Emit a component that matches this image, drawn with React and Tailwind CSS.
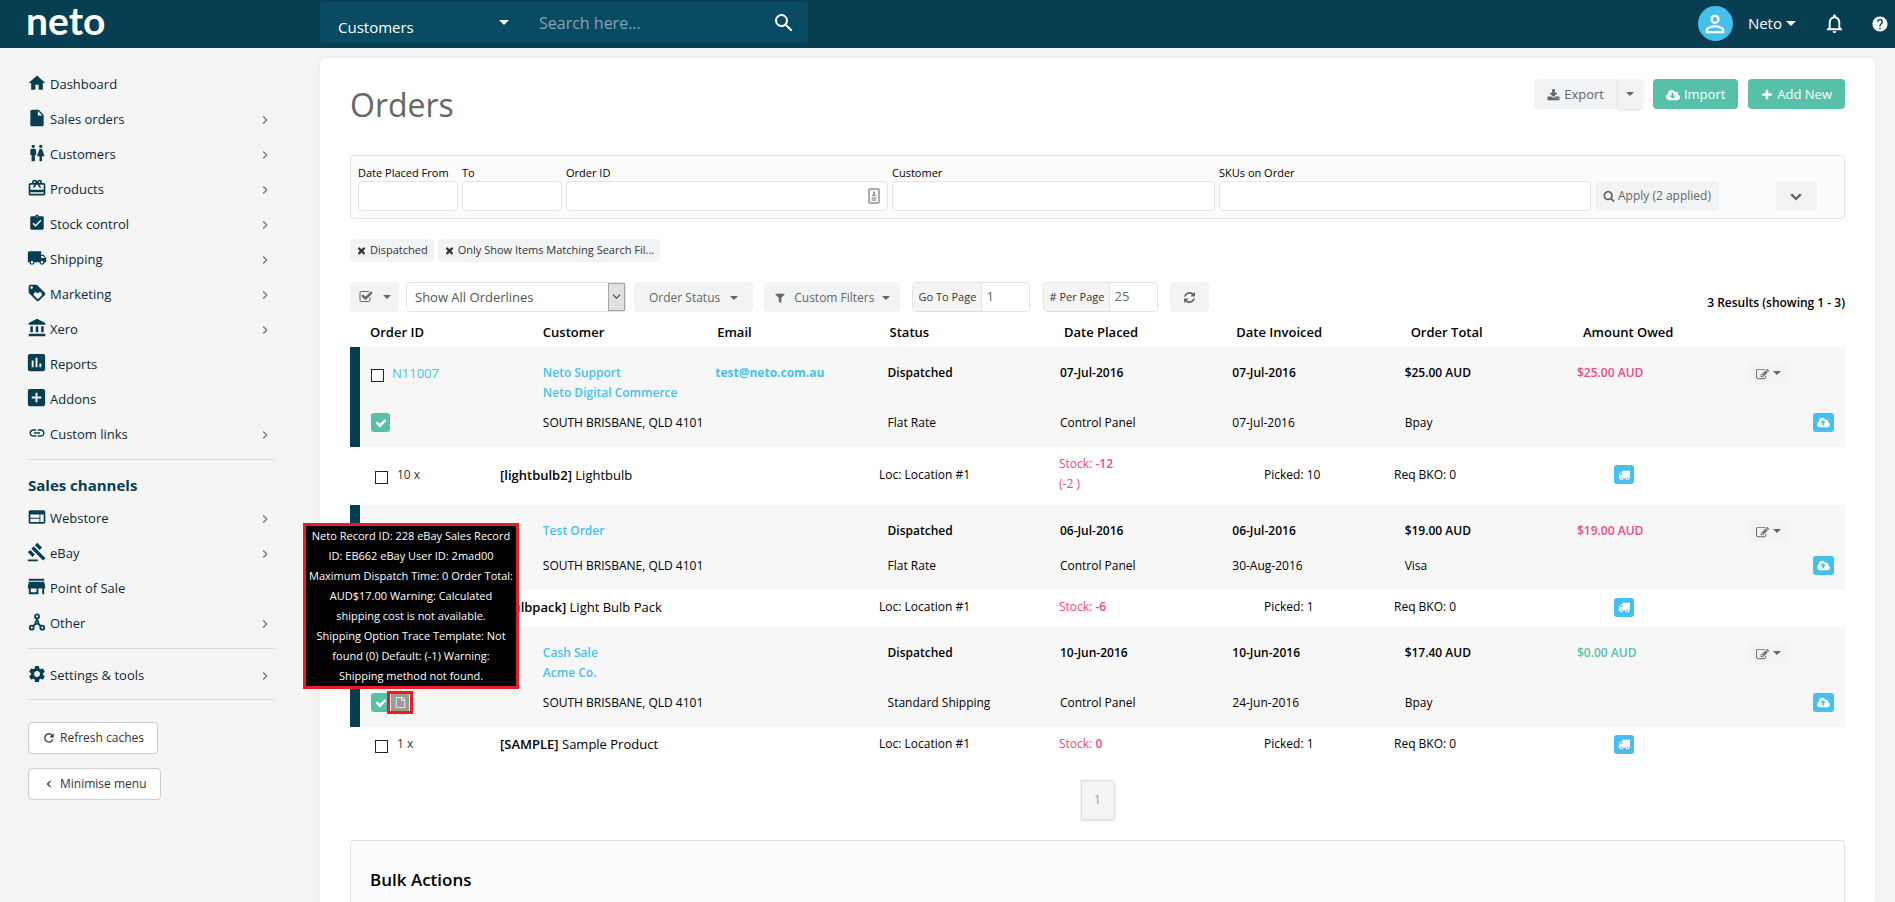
import React from 'react';
import {
  MdAccountBalance,
  MdAddBox,
  MdAssessment,
  MdAssignmentTurnedIn,
  MdCardGiftcard,
  MdChevronLeft,
  MdChevronRight,
  MdGavel,
  MdHelp,
  MdHome,
  MdInsertDriveFile,
  MdLink,
  MdLocalShipping,
  MdLoyalty,
  MdNotificationsNone,
  MdPersonOutline,
  MdRefresh,
  MdSearch,
  MdSettings,
  MdStore,
  MdWc,
  MdWeb,
} from 'react-icons/md';

// Solid glyphs on a 1792 unit grid
const GLYPHS = {
  checkSquare:
    'M1472 930v318q0 119-84.5 203.5t-203.5 84.5h-832q-119 0-203.5-84.5t-84.5-203.5v-832q0-119 84.5-203.5t203.5-84.5h832q63 0 117 25 15 7 18 23 3 17-9 29l-49 49q-10 10-23 10-3 0-9-2-23-6-45-6h-832q-66 0-113 47t-47 113v832q0 66 47 113t113 47h832q66 0 113-47t47-113v-254q0-13 9-22l64-64q10-10 23-10 6 0 12 3 20 8 20 29zm231-489l-814 814q-24 24-57 24t-57-24l-430-430q-24-24-24-57t24-57l110-110q24-24 57-24t57 24l263 263 647-647q24-24 57-24t57 24l110 110q24 24 24 57t-24 57z',
  edit: 'M888 1184l116-116-152-152-116 116v56h96v96h56zm440-720q-16-16-33 1l-350 350q-17 17-1 33t33-1l350-350q17-17 1-33zm80 594v190q0 119-84.5 203.5t-203.5 84.5h-832q-119 0-203.5-84.5t-84.5-203.5v-832q0-119 84.5-203.5t203.5-84.5h832q63 0 117 25 15 7 18 23 3 17-9 29l-49 49q-14 14-32 8-23-6-45-6h-832q-66 0-113 47t-47 113v832q0 66 47 113t113 47h832q66 0 113-47t47-113v-126q0-13 9-22l64-64q15-15 35-7t20 29zm-96-738l288 288-672 672h-288v-288zm444 132l-92 92-288-288 92-92q28-28 68-28t68 28l152 152q28 28 28 68t-28 68z',
  times:
    'M1490 1322q0 40-28 68l-136 136q-28 28-68 28t-68-28l-294-294-294 294q-28 28-68 28t-68-28l-136-136q-28-28-28-68t28-68l294-294-294-294q-28-28-28-68t28-68l136-136q28-28 68-28t68 28l294 294 294-294q28-28 68-28t68 28l136 136q28 28 28 68t-28 68l-294 294 294 294q28 28 28 68z',
  plus: 'M1600 736v192q0 40-28 68t-68 28h-416v416q0 40-28 68t-68 28h-192q-40 0-68-28t-28-68v-416h-416q-40 0-68-28t-28-68v-192q0-40 28-68t68-28h416v-416q0-40 28-68t68-28h192q40 0 68 28t28 68v416h416q40 0 68 28t28 68z',
  download:
    'M1344 1344q0-26-19-45t-45-19-45 19-19 45 19 45 45 19 45-19 19-45zm256 0q0-26-19-45t-45-19-45 19-19 45 19 45 45 19 45-19 19-45zm128-224v320q0 40-28 68t-68 28h-1472q-40 0-68-28t-28-68v-320q0-40 28-68t68-28h465l135 136q58 56 136 56t136-56l136-136h464q40 0 68 28t28 68zm-325-569q17 41-14 70l-448 448q-18 19-45 19t-45-19l-448-448q-31-29-14-70 17-39 59-39h256v-448q0-26 19-45t45-19h256q26 0 45 19t19 45v448h256q42 0 59 39z',
  check:
    'M1671 566q0 40-28 68l-724 724-136 136q-28 28-68 28t-68-28l-136-136-362-362q-28-28-28-68t28-68l136-136q28-28 68-28t68 28l294 295 656-657q28-28 68-28t68 28l136 136q28 28 28 68z',
  search:
    'M1216 832q0-185-131.5-316.5t-316.5-131.5-316.5 131.5-131.5 316.5 131.5 316.5 316.5 131.5 316.5-131.5 131.5-316.5zm512 832q0 52-38 90t-90 38q-54 0-90-38l-343-342q-179 124-399 124-143 0-273.5-55.5t-225-150-150-225-55.5-273.5 55.5-273.5 150-225 225-150 273.5-55.5 273.5 55.5 225 150 150 225 55.5 273.5q0 220-124 399l343 343q37 37 37 90z',
  chevronDown:
    'M1683 808l-742 741q-19 19-45 19t-45-19l-742-741q-19-19-19-45.5t19-45.5l166-165q19-19 45-19t45 19l531 531 531-531q19-19 45-19t45 19l166 165q19 19 19 45.5t-19 45.5z',
  filter:
    'M1595 295q17 41-14 70l-493 493v742q0 42-39 59-13 5-25 5-27 0-45-19l-256-256q-19-19-19-45v-486l-493-493q-31-29-14-70 17-39 59-39h1280q42 0 59 39z',
  refresh:
    'M1639 1056q0 5-1 7-64 268-268 434.5t-478 166.5q-146 0-282.5-55t-243.5-157l-129 129q-19 19-45 19t-45-19-19-45v-448q0-26 19-45t45-19h448q26 0 45 19t19 45-19 45l-137 137q71 66 161 102t187 36q134 0 250-65t186-179q11-17 53-117 8-23 30-23h192q13 0 22.5 9.5t9.5 22.5zm25-800v448q0 26-19 45t-45 19h-448q-26 0-45-19t-19-45 19-45l138-138q-148-137-349-137-134 0-250 65t-186 179q-11 17-53 117-8 23-30 23h-199q-13 0-22.5-9.5t-9.5-22.5v-7q65-268 270-434.5t480-166.5q146 0 284 55.5t245 156.5l130-129q19-19 45-19t45 19 19 45z',
  truck:
    'M640 1408q0-52-38-90t-90-38-90 38-38 90 38 90 90 38 90-38 38-90zm-384-512h384v-256h-158q-13 0-22 9l-195 195q-9 9-9 22v30zm1280 512q0-52-38-90t-90-38-90 38-38 90 38 90 90 38 90-38 38-90zm256-1088v1024q0 15-4 26.5t-13.5 18.5-16.5 11.5-23.5 6-22.5 2-25.5 0-22.500-.5q0 106-75 181t-181 75-181-75-75-181h-384q0 106-75 181t-181 75-181-75-75-181h-64q-3 0-22.5.5t-25.5 0-22.5-2-23.5-6-16.5-11.5-13.5-18.5-4-26.5q0-26 19-45t45-19v-320q0-8-.5-35t0-38 2.5-34.5 6.5-37 14-30.5 22.5-30l198-198q19-19 50.5-32t58.5-13h160v-192q0-26 19-45t45-19h1024q26 0 45 19t19 45z',
  file: 'M1596 380q28 28 48 76t20 88v1152q0 40-28 68t-68 28h-1344q-40 0-68-28t-28-68v-1600q0-40 28-68t68-28h896q40 0 88 20t76 48zm-444-244v376h376q-10-29-22-41l-313-313q-12-12-41-22zm384 1528v-1024h-416q-40 0-68-28t-28-68v-416h-768v1536h1280z',
  cloudUp:
    'M1280 864q0-14-9-23l-352-352q-9-9-23-9t-23 9l-351 351q-10 12-10 24 0 14 9 23t23 9h224v352q0 13 9.5 22.5t22.5 9.5h192q13 0 22.5-9.5t9.5-22.5v-352h224q13 0 22.5-9.5t9.5-22.5zm640 288q0 159-112.5 271.5t-271.5 112.5h-1088q-185 0-316.5-131.5t-131.5-316.5q0-130 70-240t188-165q-2-30-2-43 0-212 150-362t362-150q156 0 285.5 87t188.5 231q71-62 166-62 106 0 181 75t75 181q0 76-41 138 130 31 213.5 135.5t83.5 238.5z',
  cloudDown:
    'M1280 928q0-14-9-23t-23-9h-224v-352q0-13-9.5-22.5t-22.5-9.5h-192q-13 0-22.5 9.5t-9.5 22.5v352h-224q-13 0-22.5 9.5t-9.5 22.5q0 14 9 23l352 352q9 9 23 9t23-9l351-351q10-12 10-24zm640 224q0 159-112.5 271.5t-271.5 112.5h-1088q-185 0-316.5-131.5t-131.5-316.5q0-130 70-240t188-165q-2-30-2-43 0-212 150-362t362-150q156 0 285.5 87t188.5 231q71-62 166-62 106 0 181 75t75 181q0 76-41 138 130 31 213.5 135.5t83.5 238.5z',
};

function Glyph({ name, className = 'size-3' }) {
  const wide = name === 'cloudUp' || name === 'cloudDown';
  return (
    <svg viewBox={wide ? '0 0 1920 1792' : '0 0 1792 1792'} fill="currentColor" className={`shrink-0 ${className}`} aria-hidden="true">
      <path d={GLYPHS[name]} />
    </svg>
  );
}

function Caret({ className = 'w-2' }) {
  return (
    <svg viewBox="0 0 8 4" fill="currentColor" className={`shrink-0 ${className}`} aria-hidden="true">
      <path d="M0 0h8L4 4z" />
    </svg>
  );
}

function BranchIcon({ className }) {
  return (
    <svg viewBox="0 0 24 24" fill="none" stroke="currentColor" strokeWidth="2.4" className={className} aria-hidden="true">
      <circle cx="12" cy="4.5" r="2.6" />
      <circle cx="12" cy="12.5" r="2" />
      <circle cx="5" cy="19.5" r="2.6" />
      <circle cx="19" cy="19.5" r="2.6" />
      <path d="M12 7v3.5M10.5 14L7 17.5M13.5 14l3.5 3.5" />
    </svg>
  );
}

const MAIN_LINKS = [
  { label: 'Dashboard', icon: MdHome },
  { label: 'Sales orders', icon: MdInsertDriveFile, more: true },
  { label: 'Customers', icon: MdWc, more: true },
  { label: 'Products', icon: MdCardGiftcard, more: true },
  { label: 'Stock control', icon: MdAssignmentTurnedIn, iconSize: 'size-[18px]', more: true },
  { label: 'Shipping', icon: MdLocalShipping, more: true },
  { label: 'Marketing', icon: MdLoyalty, more: true },
  { label: 'Xero', icon: MdAccountBalance, more: true },
  { label: 'Reports', icon: MdAssessment, iconSize: 'size-[23px]' },
  { label: 'Addons', icon: MdAddBox, iconSize: 'size-[23px]' },
  { label: 'Custom links', icon: MdLink, iconSize: 'size-[18px]', more: true },
];

const CHANNEL_LINKS = [
  { label: 'Webstore', icon: MdWeb, more: true },
  { label: 'eBay', icon: MdGavel, more: true },
  { label: 'Point of Sale', icon: MdStore, iconSize: 'size-[23px]' },
  { label: 'Other', icon: BranchIcon, iconSize: 'size-[18px]', more: true },
];

const COLUMNS = [
  { label: 'Order ID', className: 'pl-5' },
  { label: 'Customer', className: '' },
  { label: 'Email', className: 'pl-0.5' },
  { label: 'Status', className: 'pl-0.5' },
  { label: 'Date Placed', className: 'pl-1' },
  { label: 'Date Invoiced', className: 'pl-1' },
  { label: 'Order Total', className: 'pl-1.5' },
  { label: 'Amount Owed', className: 'pl-1.5' },
];

const ORDERS = [
  {
    id: 'N11007',
    customer: ['Neto Support', 'Neto Digital Commerce'],
    email: 'test@neto.com.au',
    placed: '07-Jul-2016',
    invoiced: '07-Jul-2016',
    total: '$25.00 AUD',
    owed: '$25.00 AUD',
    shipping: 'Flat Rate',
    paidOn: '07-Jul-2016',
    payment: 'Bpay',
    item: { qty: '10 x', sku: 'lightbulb2', name: 'Lightbulb', stock: '-12', extra: '(-2 )', picked: 10 },
  },
  {
    customer: ['Test Order'],
    placed: '06-Jul-2016',
    invoiced: '06-Jul-2016',
    total: '$19.00 AUD',
    owed: '$19.00 AUD',
    shipping: 'Flat Rate',
    paidOn: '30-Aug-2016',
    payment: 'Visa',
    item: { sku: 'bulbpack', name: 'Light Bulb Pack', stock: '-6', picked: 1 },
  },
  {
    customer: ['Cash Sale', 'Acme Co.'],
    placed: '10-Jun-2016',
    invoiced: '10-Jun-2016',
    total: '$17.40 AUD',
    owed: '$0.00 AUD',
    paid: true,
    shipping: 'Standard Shipping',
    paidOn: '24-Jun-2016',
    payment: 'Bpay',
    note: true,
    item: { qty: '1 x', sku: 'SAMPLE', name: 'Sample Product', stock: '0', picked: 1 },
  },
];

const NOTE_LINES = [
  'Neto Record ID: 228 eBay Sales Record',
  'ID: EB662 eBay User ID: 2mad00',
  'Maximum Dispatch Time: 0 Order Total:',
  'AUD$17.00 Warning: Calculated',
  'shipping cost is not available.',
  'Shipping Option Trace Template: Not',
  'found (0) Default: (-1) Warning:',
  'Shipping method not found.',
];

const grayButton = 'flex h-[30px] items-center rounded bg-[#f1f3f5] text-[#666]';
const greenButton = 'ml-2.5 flex h-[30px] items-center gap-1 rounded bg-[#57c0a9] px-[13px] pt-0.5 text-white';
const checkbox = 'size-[13px] shrink-0 appearance-none border border-[#222] bg-white';

function Header() {
  return (
    <header className="flex h-12 items-start bg-[#083e52] text-white">
      <a href="#home" className="w-[320px] shrink-0 pl-[26px] font-['Lato'] text-[39px] leading-[40px] font-bold">
        neto
      </a>
      <form className="mt-0.5 flex h-[41px] w-[488px] items-center rounded bg-[#0a4b64]">
        <div className="relative flex w-[200px] items-center">
          <select aria-label="Search in" className="h-[41px] w-full appearance-none bg-transparent pt-2.5 pl-[18px] text-[15px] outline-none">
            <option>Customers</option>
          </select>
          <Caret className="pointer-events-none absolute right-[11px] w-[10px]" />
        </div>
        <input
          aria-label="Search"
          placeholder="Search here..."
          className="min-w-0 flex-1 bg-transparent pl-[19px] text-[16px] outline-none placeholder:text-[#84a5b1]"
        />
        <button type="button" aria-label="Search" className="px-3">
          <MdSearch className="size-6" />
        </button>
      </form>
      <div className="ml-auto flex h-[47px] items-center">
        <span className="flex size-[35px] items-center justify-center rounded-full bg-[#46bfee]">
          <MdPersonOutline className="size-7" />
        </span>
        <button type="button" className="ml-[15px] flex items-center gap-1 text-[15px]">
          Neto
          <Caret className="w-[10px]" />
        </button>
        <button type="button" aria-label="Notifications" className="ml-[27px]">
          <MdNotificationsNone className="size-[23px]" />
        </button>
        <button type="button" aria-label="Help" className="mr-1.5 ml-[25px]">
          <MdHelp className="size-[18px]" />
        </button>
      </div>
    </header>
  );
}

function NavItem({ label, icon: Icon, iconSize = 'size-5', more }) {
  return (
    <li>
      <a href="#nav" className="flex h-[35px] items-center pt-0.5 text-[13px] text-[#0b2a36]">
        <span className="mr-[5px] mb-1 flex w-[17px] justify-center text-[#083e52]">
          <Icon className={`shrink-0 ${iconSize}`} />
        </span>
        {label}
        {more && <MdChevronRight className="mr-0.5 ml-auto size-4 text-[#777]" />}
      </a>
    </li>
  );
}

function Sidebar() {
  return (
    <nav className="w-[320px] shrink-0 pt-[18px] pr-[45px] pl-7">
      <ul>
        {MAIN_LINKS.map((link) => (
          <NavItem key={link.label} {...link} />
        ))}
      </ul>
      <hr className="mt-2 border-[#d8d8d8]" />
      <h2 className="pt-[15px] pb-1 text-[15px] leading-[21px] font-bold text-[#083e52]">Sales channels</h2>
      <ul>
        {CHANNEL_LINKS.map((link) => (
          <NavItem key={link.label} {...link} />
        ))}
      </ul>
      <hr className="my-2 border-[#d8d8d8]" />
      <ul>
        <NavItem label="Settings & tools" icon={MdSettings} more />
      </ul>
      <hr className="mt-[7px] border-[#d8d8d8]" />
      <div className="mt-[22px] flex flex-col items-start gap-3.5 text-[12px] text-[#333]">
        <button type="button" className="flex h-8 items-center gap-1 rounded border border-[#ccc] bg-white pr-[13px] pl-[13px]">
          <MdRefresh className="size-3.5" /> Refresh caches
        </button>
        <button type="button" className="flex h-8 items-center gap-1 rounded border border-[#ccc] bg-white pr-[13px] pl-[13px]">
          <MdChevronLeft className="size-3.5" /> Minimise menu
        </button>
      </div>
    </nav>
  );
}

function FilterField({ label, id, className, children }) {
  return (
    <div className={className}>
      <label htmlFor={id} className="block text-[11px] leading-[17px] text-black">
        {label}
      </label>
      <div className="relative">
        <input id={id} className="h-[30px] w-full rounded border border-[#e3e3e3] bg-white px-2 text-[13px]" />
        {children}
      </div>
    </div>
  );
}

function Filters() {
  return (
    <form className="mt-[27px] flex items-end gap-1 rounded border border-[#e2e2e2] bg-[#fcfcfc] px-[7px] pt-2 pb-[7px]">
      <FilterField label="Date Placed From" id="date-from" className="w-[100px]" />
      <FilterField label="To" id="date-to" className="w-[100px]" />
      <FilterField label="Order ID" id="order-id" className="flex-[322]">
        <svg viewBox="0 0 12 16" className="absolute top-[7px] right-2 h-4 w-3" aria-hidden="true">
          <rect x="1" y="1" width="10" height="14" rx="1" fill="#fff" stroke="#909090" strokeWidth="1.5" />
          <path d="M6 3.5v4" stroke="#808080" strokeWidth="1.6" />
          <path d="M4 7.5h4M3.5 10h5M3.5 12h5" stroke="#a0a0a0" strokeWidth="1.4" />
        </svg>
      </FilterField>
      <FilterField label="Customer" id="customer" className="flex-[323]" />
      <FilterField label="SKUs on Order" id="skus" className="flex-[372]" />
      <button type="button" className={`${grayButton} gap-[3px] px-2 text-[12px]`}>
        <Glyph name="search" /> Apply (2 applied)
      </button>
      <button type="button" aria-label="More filters" className={`${grayButton} mr-5 ml-[53px] w-[41px] justify-center`}>
        <Glyph name="chevronDown" />
      </button>
    </form>
  );
}

function Toolbar() {
  return (
    <div className="mt-5 flex items-center text-[#666]">
      <button type="button" aria-label="Select orders" className={`${grayButton} mr-[7px] w-[49px] justify-center gap-2.5`}>
        <Glyph name="checkSquare" className="size-[14px]" />
        <Caret />
      </button>
      <div className="relative mr-2 w-[220px]">
        <select
          aria-label="Orderlines"
          className="h-[30px] w-full appearance-none rounded border border-[#e3e3e3] bg-white pt-0.5 pl-2 text-[13px] text-[#555]"
        >
          <option>Show All Orderlines</option>
        </select>
        <span className="pointer-events-none absolute top-px right-px flex h-7 w-[17px] items-center justify-center border border-[#a5a5a5] bg-[#e1e1e1]">
          <svg viewBox="0 0 10 6" className="w-[9px]" fill="none" stroke="#444" strokeWidth="1.2" aria-hidden="true">
            <path d="M1 .7l4 4 4-4" />
          </svg>
        </span>
      </div>
      <button type="button" className={`${grayButton} mr-[11px] gap-2.5 px-[15px] pt-0.5 text-[12px]`}>
        Order Status <Caret />
      </button>
      <button type="button" className={`${grayButton} mr-3 gap-2 px-2.5 pt-0.5 text-[12px]`}>
        <Glyph name="filter" /> Custom Filters <Caret />
      </button>
      <label className="mr-[13px] flex h-[30px] w-[118px] overflow-hidden rounded border border-[#e3e3e3]">
        <span className="flex items-center border-r border-[#e3e3e3] bg-[#f5f5f5] px-[5px] text-[11px] whitespace-nowrap text-[#333]">
          Go To Page
        </span>
        <input defaultValue="1" className="w-0 min-w-0 flex-1 bg-white px-1 text-[13px] text-[#666]" />
      </label>
      <label className="mr-3 flex h-[30px] w-[115px] overflow-hidden rounded border border-[#e3e3e3]">
        <span className="flex items-center border-r border-[#e3e3e3] bg-[#f5f5f5] px-[5px] text-[11px] whitespace-nowrap text-[#333]">
          # Per Page
        </span>
        <input defaultValue="25" className="w-0 min-w-0 flex-1 bg-white px-1 text-[13px] text-[#666]" />
      </label>
      <button type="button" aria-label="Refresh" className={`${grayButton} w-[39px] justify-center`}>
        <Glyph name="refresh" className="size-[13px]" />
      </button>
      <p className="mt-[11px] ml-auto text-[12px] font-semibold text-black">3 Results (showing 1 - 3)</p>
    </div>
  );
}

function NoteBadge() {
  return (
    <span className="relative -ml-[3px] flex h-[23px] w-[26px] border-[3px] border-[#ed1c24] bg-[#f7f7f7] px-px">
      <button type="button" aria-label="Order notes" className="flex flex-1 items-center justify-center bg-[#999] text-white">
        <Glyph name="file" className="size-[11px]" />
      </button>
      <span
        role="tooltip"
        className="absolute -left-[87px] bottom-[22px] w-[216px] border-[3px] border-[#ed1c24] bg-black text-center text-[11px] leading-5 whitespace-nowrap text-white"
      >
        {NOTE_LINES.map((line) => (
          <span key={line} className="block">
            {line}
          </span>
        ))}
      </span>
    </span>
  );
}

function OrderRows({ order }) {
  const { item } = order;
  return (
    <tbody className="text-[12px] leading-5 text-black">
      <tr className="h-[41px] bg-[#f7f7f7] align-top font-semibold">
        <td className="border-l-[10px] border-[#083e52] pt-4 pl-[11px]">
          <div className="flex gap-2">
            <input type="checkbox" aria-label="Select order" className={`${checkbox} mt-1.5`} />
            {order.id && (
              <a href="#order" className="text-[13px] font-normal text-[#46bfee]">
                {order.id}
              </a>
            )}
          </div>
        </td>
        <td className="pt-4">
          {order.customer.map((name) => (
            <a key={name} href="#customer" className="block text-[#46bfee]">
              {name}
            </a>
          ))}
        </td>
        <td className="pt-4">
          {order.email && (
            <a href="#email" className="font-bold text-[#46bfee]">
              {order.email}
            </a>
          )}
        </td>
        <td className="pt-4">Dispatched</td>
        <td className="pt-4">{order.placed}</td>
        <td className="pt-4">{order.invoiced}</td>
        <td className="pt-4">{order.total}</td>
        <td className={order.paid ? 'pt-4 text-[#57c0a9]' : 'pt-4 text-[#f04b80]'}>{order.owed}</td>
        <td className="pt-[15px]">
          <button type="button" aria-label="Edit order" className="flex h-[22px] w-[39px] items-center justify-center gap-1 rounded bg-[#f1f3f5] text-[#666]">
            <Glyph name="edit" className="mt-0.5 size-[13px]" />
            <Caret />
          </button>
        </td>
      </tr>
      <tr className="h-11 bg-[#f7f7f7] align-top">
        <td className="border-l-[10px] border-[#083e52] pl-[11px]">
          <div className="flex h-[39px] items-center">
            <span className="flex size-[19px] items-center justify-center rounded-[3px] bg-[#57c0a9] text-white">
              <Glyph name="check" />
            </span>
            {order.note && <NoteBadge />}
          </div>
        </td>
        <td className="pt-2.5">SOUTH BRISBANE, QLD 4101</td>
        <td />
        <td className="pt-2.5">{order.shipping}</td>
        <td className="pt-2.5">Control Panel</td>
        <td className="pt-2.5">{order.paidOn}</td>
        <td className="pt-2.5">{order.payment}</td>
        <td />
        <td className="pt-2.5">
          <button type="button" aria-label="Upload" className="mr-[11px] ml-auto flex h-[19px] w-[21px] items-center justify-center rounded-[3px] bg-[#46bfee] text-white">
            <Glyph name="cloudUp" className="h-3 w-[13px]" />
          </button>
        </td>
      </tr>
      <tr>
        <td colSpan={9}>
          <div className="grid grid-cols-[150fr_379fr_180fr_205fr_130fr_220fr_231fr] pt-[7px] pb-2.5 text-[12px]">
            <label className="flex gap-[9px] self-center pl-[25px] text-[#333]">
              <input type="checkbox" aria-label="Select item" className={`${checkbox} mt-1.5`} />
              {item.qty}
            </label>
            <span className="self-center text-[13px]">
              <strong className="font-semibold">[{item.sku}]</strong> {item.name}
            </span>
            <span className="self-center">Loc: Location #1</span>
            <span className="text-[#f04b80]">
              Stock: <strong className="font-semibold">{item.stock}</strong>
              {item.extra && <span className="mb-px block">{item.extra}</span>}
            </span>
            <span className="self-center">Picked: {item.picked}</span>
            <span className="self-center">Req BKO: 0</span>
            <button type="button" aria-label="Dispatch item" className="flex h-[19px] w-5 items-center justify-center self-center rounded-[3px] bg-[#46bfee] text-white">
              <Glyph name="truck" />
            </button>
          </div>
        </td>
      </tr>
    </tbody>
  );
}

function OrdersTable() {
  return (
    <table className="mt-1.5 w-full table-fixed border-separate border-spacing-0 text-left">
      <colgroup>
        <col className="w-[12.9%]" />
        <col className="w-[11.53%]" span={7} />
        <col />
      </colgroup>
      <thead>
        <tr className="h-[29px] text-[13px] text-black">
          {COLUMNS.map((column) => (
            <th key={column.label} className={`font-semibold ${column.className}`}>
              {column.label}
            </th>
          ))}
          <td />
        </tr>
      </thead>
      {ORDERS.map((order) => (
        <OrderRows key={order.placed} order={order} />
      ))}
    </table>
  );
}

export default function App() {
  return (
    <div className="flex min-h-screen flex-col bg-[#f5f5f5] font-['Open_Sans',sans-serif] text-[13px]">
      <Header />
      <div className="flex flex-1">
        <Sidebar />
        <main className="mt-2.5 mr-5 flex min-w-0 flex-1 flex-col rounded-t-md bg-white px-[30px] pt-[21px] shadow-[0_0_6px_rgba(0,0,0,0.06)]">
          <div className="flex items-start">
            <h1 className="pt-1 pb-0.5 text-[32px] leading-[43px] text-[#666]">Orders</h1>
            <div className="ml-auto flex text-[13px]">
              <button type="button" className={`${grayButton} gap-1 rounded-r-none px-[13px] pt-0.5`}>
                <Glyph name="download" className="size-[13px]" /> Export
              </button>
              <button type="button" aria-label="Export options" className={`${grayButton} w-[26px] justify-center rounded-l-none border-l border-[#e9ebee] shadow-sm`}>
                <Caret />
              </button>
              <button type="button" className={greenButton}>
                <Glyph name="cloudDown" className="h-[13px] w-[14px]" /> Import
              </button>
              <button type="button" className={greenButton}>
                <Glyph name="plus" /> Add New
              </button>
            </div>
          </div>
          <Filters />
          <div className="mt-5 flex gap-1 text-[11px] text-[#333]">
            <button type="button" className="flex h-[23px] items-center gap-[3px] rounded bg-[#f1f3f5] px-1.5">
              <Glyph name="times" className="size-[11px]" /> Dispatched
            </button>
            <button type="button" className="flex h-[23px] items-center gap-[3px] rounded bg-[#f1f3f5] px-1.5">
              <Glyph name="times" className="size-[11px]" /> Only Show Items Matching Search Fil...
            </button>
          </div>
          <Toolbar />
          <OrdersTable />
          <nav aria-label="Pages" className="mt-4 flex justify-center">
            <a href="#page-1" className="flex h-10 w-[34px] items-center justify-center rounded-r border border-[#ddd] bg-[#f5f5f5] text-[12px] text-[#999] shadow-sm">
              1
            </a>
          </nav>
          <section className="mt-5 flex-1 rounded-t border border-b-0 border-[#e2e2e2] bg-[#fcfcfc] px-[19px] pt-[27px]">
            <h2 className="text-[17px] leading-6 font-semibold text-black">Bulk Actions</h2>
          </section>
        </main>
      </div>
    </div>
  );
}
